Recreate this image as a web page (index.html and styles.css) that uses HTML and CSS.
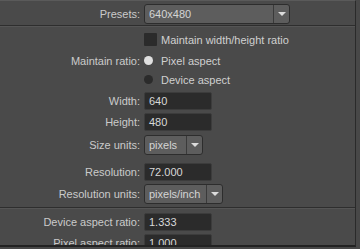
FILE: index.html
```html
<!DOCTYPE html>
<html>
<head>
<meta charset="utf-8">
<link rel="stylesheet" href="styles.css">
</head>
<body>
<div class="panel">
  <div class="top">
    <div class="row r-presets">
      <span class="label">Presets:</span>
      <div class="combo w-presets"><span class="combo-text">640x480</span><span class="combo-btn"><span class="tri"></span></span></div>
    </div>
  </div>
  <div class="section">
    <div class="row r-check">
      <span class="label"></span>
      <label class="opt"><span class="checkbox"></span><span>Maintain width/height ratio</span></label>
    </div>
    <div class="row r-radio1">
      <span class="label">Maintain ratio:</span>
      <label class="opt"><span class="radio on"></span><span>Pixel aspect</span></label>
    </div>
    <div class="row r-radio2">
      <span class="label"></span>
      <label class="opt"><span class="radio"></span><span>Device aspect</span></label>
    </div>
    <div class="row r-field g2">
      <span class="label">Width:</span>
      <div class="field">640</div>
    </div>
    <div class="row r-field g1">
      <span class="label">Height:</span>
      <div class="field">480</div>
    </div>
    <div class="row r-combo g2">
      <span class="label">Size units:</span>
      <div class="combo w-size"><span class="combo-text">pixels</span><span class="combo-btn"><span class="tri"></span></span></div>
    </div>
    <div class="row r-field g7">
      <span class="label">Resolution:</span>
      <div class="field">72.000</div>
    </div>
    <div class="row r-combo g1">
      <span class="label">Resolution units:</span>
      <div class="combo w-res"><span class="combo-text">pixels/inch</span><span class="combo-btn"><span class="tri"></span></span></div>
    </div>
  </div>
  <div class="section last">
    <div class="row r-field">
      <span class="label">Device aspect ratio:</span>
      <div class="field">1.333</div>
    </div>
    <div class="row r-field g1">
      <span class="label">Pixel aspect ratio:</span>
      <div class="field">1.000</div>
    </div>
  </div>
</div>
</body>
</html>
```

FILE: styles.css
```css
html, body {
  margin: 0;
  padding: 0;
  background: #484848;
  width: 360px;
  height: 249px;
  overflow: hidden;
}
body {
  font-family: "Liberation Sans", Arial, sans-serif;
  font-size: 11px;
  color: #cacaca;
}
.panel {
  width: 356px;
  height: 247px;
  border-right: 1px solid #2a2a2a;
  border-bottom: 2px solid #222;
  border-top: 1px solid #5a5a5a;
  box-sizing: border-box;
  background: #4a4a4a;
  overflow: hidden;
}
.top {
  height: 25px;
  padding-top: 3px;
  box-sizing: border-box;
  border-bottom: 1px solid #2e2e2e;
}
.section {
  display: flex;
  flex-direction: column;
  padding-top: 3px;
  padding-bottom: 3px;
  border-top: 1px solid #555;
  border-bottom: 1px solid #2e2e2e;
}
.section.last {
  border-bottom: none;
  padding-top: 3px;
}
.row {
  display: grid;
  grid-template-columns: 140px auto;
  column-gap: 4px;
  align-items: center;
  justify-items: start;
}
.label {
  justify-self: end;
  white-space: nowrap;
}
.r-presets { height: 20px; }
.r-check { height: 19px; }
.r-radio1 { height: 19px; margin-top: 2px; }
.r-radio2 { height: 19px; }
.r-field { height: 20px; }
.r-combo { height: 21px; }
.g1 { margin-top: 1px; }
.g2 { margin-top: 2px; }
.g7 { margin-top: 7px; }

.opt {
  display: flex;
  align-items: center;
  white-space: nowrap;
  color: #d0d0d0;
}
.checkbox {
  width: 13px;
  height: 13px;
  background: #2b2b2b;
  border-radius: 1px;
  margin-right: 4px;
}
.radio {
  width: 9px;
  height: 9px;
  border-radius: 50%;
  background: #2b2b2b;
  margin-right: 8px;
  margin-left: 0;
}
.radio.on {
  background: #e0e0e0;
}
.field {
  width: 68px;
  height: 18px;
  box-sizing: border-box;
  background: #2b2b2b;
  border: 1px solid #3c3c3c;
  border-radius: 2px;
  padding-left: 4px;
  line-height: 16px;
  color: #d8d8d8;
}
.combo {
  display: flex;
  height: 20px;
  box-sizing: border-box;
  border: 1px solid #2d2d2d;
  border-radius: 3px;
  background: #5d5d5d;
  color: #d4d4d4;
}
.combo-text {
  flex: 1;
  padding-left: 4px;
  line-height: 18px;
}
.combo-btn {
  width: 15px;
  border-left: 1px solid #3a3a3a;
  display: flex;
  align-items: center;
  justify-content: center;
}
.tri {
  width: 0;
  height: 0;
  border-left: 4px solid transparent;
  border-right: 4px solid transparent;
  border-top: 4px solid #dcdcdc;
}
.w-presets { width: 146px; }
.w-size { width: 59px; }
.w-res { width: 79px; }
```
